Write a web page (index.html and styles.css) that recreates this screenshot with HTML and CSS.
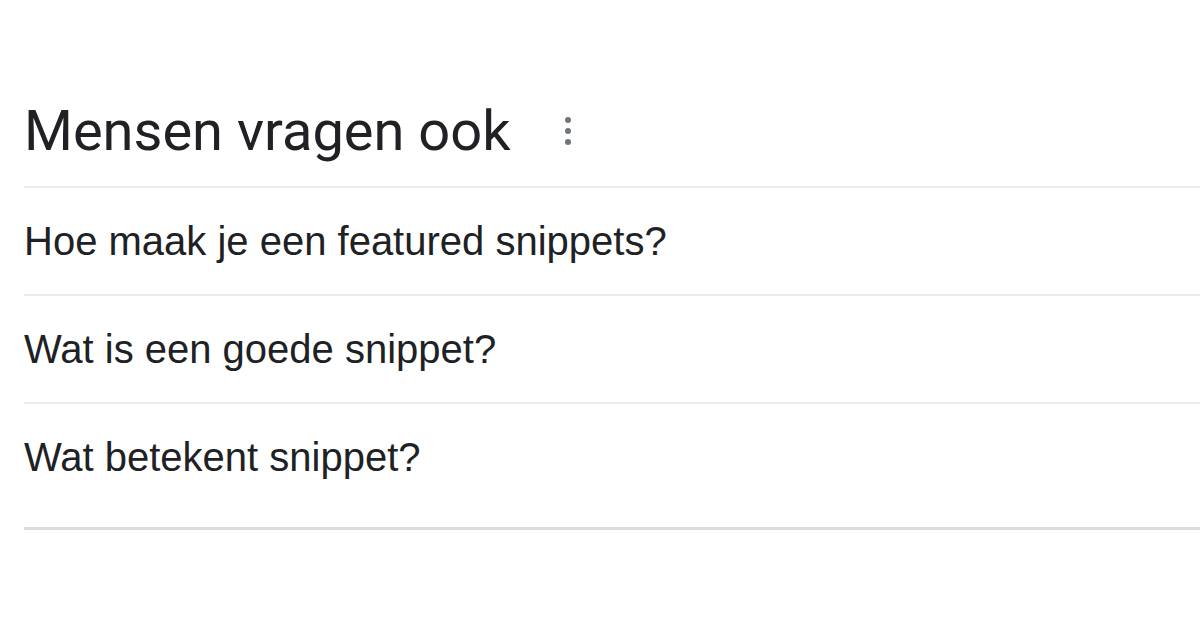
FILE: index.html
```html
<!DOCTYPE html>
<html lang="nl">
<head>
<meta charset="utf-8">
<title>Mensen vragen ook</title>
<link rel="stylesheet" href="styles.css">
</head>
<body>
<div class="panel">
  <div class="head">
    <h2 class="title">Mensen vragen ook</h2>
    <svg class="more" width="12" height="34" viewBox="0 0 12 34" aria-hidden="true">
      <circle cx="6" cy="6" r="3"/>
      <circle cx="6" cy="17" r="3"/>
      <circle cx="6" cy="28" r="3"/>
    </svg>
  </div>
  <div class="list">
    <div class="item">Hoe maak je een featured snippets?</div>
    <div class="item">Wat is een goede snippet?</div>
    <div class="item last">Wat betekent snippet?</div>
  </div>
</div>
</body>
</html>
```
FILE: styles.css
```css
html, body {
  margin: 0;
  padding: 0;
  background: #ffffff;
}
.panel {
  padding-left: 24px;
  color: #202124;
}
.head {
  display: flex;
  align-items: center;
  padding-top: 103px;
  padding-bottom: 27px;
}
.title {
  margin: 0;
  font-family: Roboto, "Liberation Sans", sans-serif;
  font-weight: 400;
  font-size: 56px;
  line-height: 56px;
  color: #202124;
}
.more {
  fill: #70757a;
  margin-left: 51px;
}
.list {
  border-bottom: 3px solid #dadce0;
}
.item {
  border-top: 2px solid #ebebeb;
  padding: 33px 0;
  font-family: "Liberation Sans", Arial, sans-serif;
  font-size: 40px;
  line-height: 40px;
  color: #202124;
}
.item.last {
  padding-bottom: 50px;
}
```
